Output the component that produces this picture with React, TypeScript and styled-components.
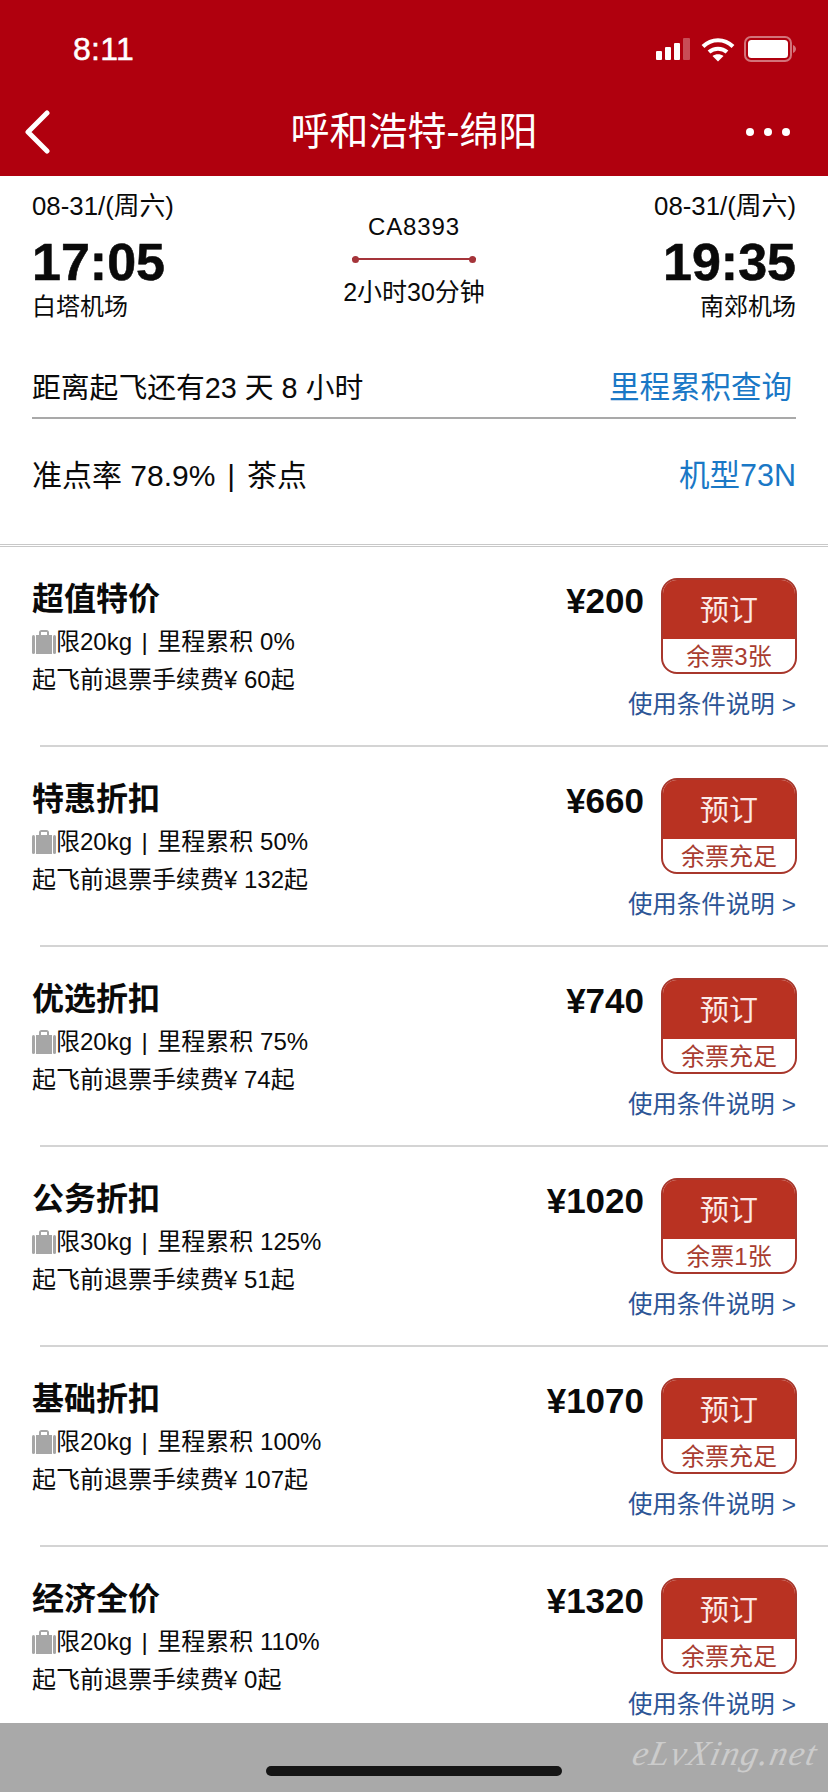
import React from "react";
import styled, { createGlobalStyle } from "styled-components";

const GlobalStyle = createGlobalStyle`
  html, body {
    margin: 0;
    padding: 0;
    background: #fff;
  }
  * {
    box-sizing: border-box;
  }
`;

const Page = styled.div`
  width: 828px;
  height: 1792px;
  display: flex;
  flex-direction: column;
  overflow: hidden;
  background: #fff;
  color: #0a0a0a;
  font-family: "Liberation Sans", "Noto Sans CJK SC", sans-serif;
`;

const Header = styled.header`
  height: 176px;
  flex: none;
  background: #b0000e;
  color: #fff;
`;

const StatusBar = styled.div`
  height: 100px;
  padding: 29px 32px 0 73px;
  display: flex;
  justify-content: space-between;
  align-items: flex-start;
`;

const Clock = styled.span`
  font-size: 32px;
  line-height: 40px;
  font-weight: 400;
  letter-spacing: 0.3px;
  -webkit-text-stroke: 0.5px #fff;
`;

const StatusIcons = styled.div`
  display: flex;
  align-items: center;
  gap: 9px;
  height: 40px;
`;

const NavBar = styled.div`
  height: 64px;
  padding: 0 24px;
  display: grid;
  grid-template-columns: 1fr auto 1fr;
  align-items: center;
`;

const NavTitle = styled.h1`
  margin: 0;
  font-size: 39px;
  line-height: 50px;
  font-weight: 400;
`;

const MoreSlot = styled.div`
  display: flex;
  justify-content: flex-end;
  padding-right: 14px;
`;

const Flight = styled.section`
  padding: 12px 32px 0;
  display: flex;
  justify-content: space-between;
  height: 143px;
`;

const Stop = styled.div<{ $end?: boolean }>`
  display: flex;
  flex-direction: column;
  align-items: ${(p) => (p.$end ? "flex-end" : "flex-start")};
`;

const DateText = styled.div`
  font-size: 25.8px;
  line-height: 36px;
`;

const Time = styled.div`
  font-size: 52px;
  line-height: 57px;
  font-weight: 700;
  margin-top: 10px;
  -webkit-text-stroke: 0.6px #0a0a0a;
`;

const Airport = styled.div`
  font-size: 24px;
  line-height: 32px;
`;

const Middle = styled.div`
  padding-top: 23px;
  display: flex;
  flex-direction: column;
  align-items: center;
  font-size: 25px;
  line-height: 32px;
`;

const FlightNo = styled.div`
  font-size: 24px;
  letter-spacing: 0.9px;
`;

const RouteLine = styled.div`
  width: 124px;
  height: 2px;
  margin: 15px 0 16px;
  background: #a5343a;
  display: flex;
  justify-content: space-between;
  align-items: center;
`;

const RouteDot = styled.i`
  width: 7px;
  height: 7px;
  border-radius: 50%;
  background: #a5343a;
`;

const InfoBlock = styled.section`
  padding: 0 32px;
`;

const InfoRow = styled.div<{ $line?: boolean }>`
  display: flex;
  justify-content: space-between;
  align-items: center;
  height: ${(p) => (p.$line ? "100px" : "108px")};
  padding-top: ${(p) => (p.$line ? "34px" : "0")};
  font-size: ${(p) => (p.$line ? "28.8px" : "30px")};
  border-bottom: ${(p) => (p.$line ? "2px solid #a9a9a9" : "none")};
`;

const InfoLink = styled.a<{ $inset?: boolean }>`
  font-size: 30.5px;
  margin-right: ${(p) => (p.$inset ? "4px" : "0")};
  color: #1a78c6;
`;

const Pipe = styled.span`
  margin: 0 0.12em;
  font-weight: 300;
`;

const SectionRule = styled.div`
  flex: none;
  height: 3px;
  margin-top: 17px;
  border-top: 1px solid #c8c8c8;
  border-bottom: 1px solid #c8c8c8;
`;

const List = styled.div`
  flex: 1;
  min-height: 0;
  overflow: hidden;
`;

const Fare = styled.article`
  height: 198px;
  padding: 31px 31px 0 32px;
  display: flex;
  justify-content: space-between;
`;

const FareInfo = styled.div`
  display: flex;
  flex-direction: column;
  margin-top: -1px;
`;

const FareName = styled.div`
  font-size: 32px;
  line-height: 44px;
  font-weight: 700;
`;

const Baggage = styled.div`
  display: flex;
  align-items: center;
  font-size: 24px;
  line-height: 36px;
  margin-top: 3px;
  white-space: pre;
`;

const Refund = styled.div`
  font-size: 24px;
  line-height: 36px;
  margin-top: 2px;
`;

const FareSide = styled.div`
  display: flex;
  flex-direction: column;
  align-items: flex-end;
`;

const BuyRow = styled.div`
  display: flex;
  gap: 17px;
`;

const Price = styled.div`
  font-size: 35px;
  line-height: 46px;
  font-weight: 700;
`;

const BookButton = styled.button`
  width: 136px;
  height: 96px;
  padding: 0;
  border: 2px solid #a8372c;
  border-radius: 16px;
  overflow: hidden;
  background: #fff;
  display: flex;
  flex-direction: column;
  font-family: inherit;
`;

const BookLabel = styled.span`
  height: 59px;
  width: 100%;
  flex: none;
  background: #b93222;
  color: #fbe9e6;
  font-size: 29px;
  line-height: 62px;
`;

const Stock = styled.span`
  flex: 1;
  width: 100%;
  color: #a83c30;
  font-size: 24px;
  line-height: 36px;
`;

const Terms = styled.a`
  margin-top: 15px;
  margin-right: 1px;
  font-size: 24.5px;
  line-height: 32px;
  color: #2c5596;
  white-space: pre;
`;

const Rule = styled.div`
  height: 2px;
  margin-left: 40px;
  background: #d4d4d4;
`;

const HomeArea = styled.footer`
  flex: none;
  height: 69px;
  padding-top: 43px;
  background: #a9a9a9;
  display: flex;
  justify-content: center;
  position: relative;
`;

const HomeBar = styled.div`
  width: 296px;
  height: 10px;
  border-radius: 5px;
  background: #151515;
`;

const Watermark = styled.span`
  position: absolute;
  right: 10px;
  top: 11px;
  font-family: "Liberation Serif", serif;
  font-style: italic;
  font-size: 35px;
  letter-spacing: 1.5px;
  color: #cccccc;
  transform: skewX(-12deg);
`;

const fares = [
  { name: "超值特价", bag: "20kg", miles: "0%", fee: "60", price: "200", stock: "余票3张" },
  { name: "特惠折扣", bag: "20kg", miles: "50%", fee: "132", price: "660", stock: "余票充足" },
  { name: "优选折扣", bag: "20kg", miles: "75%", fee: "74", price: "740", stock: "余票充足" },
  { name: "公务折扣", bag: "30kg", miles: "125%", fee: "51", price: "1020", stock: "余票1张" },
  { name: "基础折扣", bag: "20kg", miles: "100%", fee: "107", price: "1070", stock: "余票充足" },
  { name: "经济全价", bag: "20kg", miles: "110%", fee: "0", price: "1320", stock: "余票充足" },
];

const SignalIcon = () => (
  <svg width="37" height="24" viewBox="0 0 37 24">
    <rect x="1" y="14" width="6" height="9" rx="1" fill="#fff" />
    <rect x="10" y="10" width="6" height="13" rx="1" fill="#fff" />
    <rect x="19" y="6" width="6" height="17" rx="1" fill="#fff" />
    <rect x="28" y="1" width="7" height="22" rx="1" fill="#fff" fillOpacity="0.3" />
  </svg>
);

const WifiIcon = () => (
  <svg width="34" height="25" viewBox="0 0 34 25" fill="none" stroke="#fff" strokeWidth="4">
    <path d="M2 9.5C10.5 1 23.5 1 32 9.5" />
    <path d="M8 15C13 10.5 21 10.5 26 15" />
    <path d="M17 24.5 L11.5 19 C14.5 16.8 19.5 16.8 22.5 19 Z" fill="#fff" stroke="none" />
  </svg>
);

const BatteryIcon = () => (
  <svg width="52" height="26" viewBox="0 0 52 26">
    <rect x="1" y="1" width="46" height="24" rx="6" fill="none" stroke="#fff" strokeOpacity="0.45" strokeWidth="2" />
    <rect x="4" y="4" width="40" height="18" rx="3.5" fill="#fff" />
    <path d="M49 9 C51 10 52 11.5 52 13 C52 14.5 51 16 49 17 Z" fill="#fff" fillOpacity="0.45" />
  </svg>
);

const BackIcon = () => (
  <svg width="28" height="44" viewBox="0 0 28 44" fill="none" stroke="#fff" strokeWidth="5" strokeLinecap="round" strokeLinejoin="round">
    <path d="M23 3 L4 22 L23 41" />
  </svg>
);

const MoreIcon = () => (
  <svg width="44" height="10" viewBox="0 0 44 10" fill="#fff">
    <circle cx="4" cy="5" r="4" />
    <circle cx="22" cy="5" r="4" />
    <circle cx="40" cy="5" r="4" />
  </svg>
);

const BagIcon = () => (
  <svg width="24" height="26" viewBox="0 0 24 26">
    <path d="M7 6V3.5C7 2 8 1 9.5 1h5C16 1 17 2 17 3.5V6h-2V3h-6v3z" fill="#a6a6a6" />
    <rect x="0" y="6" width="3" height="19" rx="1.5" fill="#a6a6a6" />
    <rect x="4" y="6" width="16" height="19" fill="#a6a6a6" />
    <rect x="21" y="6" width="3" height="19" rx="1.5" fill="#a6a6a6" />
  </svg>
);

const App: React.FC = () => {
  return (
    <Page>
      <GlobalStyle />
      <Header>
        <StatusBar>
          <Clock>8:11</Clock>
          <StatusIcons>
            <SignalIcon />
            <WifiIcon />
            <BatteryIcon />
          </StatusIcons>
        </StatusBar>
        <NavBar>
          <BackIcon />
          <NavTitle>呼和浩特-绵阳</NavTitle>
          <MoreSlot>
            <MoreIcon />
          </MoreSlot>
        </NavBar>
      </Header>

      <Flight>
        <Stop>
          <DateText>08-31/(周六)</DateText>
          <Time>17:05</Time>
          <Airport>白塔机场</Airport>
        </Stop>
        <Middle>
          <FlightNo>CA8393</FlightNo>
          <RouteLine>
            <RouteDot />
            <RouteDot />
          </RouteLine>
          <div>2小时30分钟</div>
        </Middle>
        <Stop $end>
          <DateText>08-31/(周六)</DateText>
          <Time>19:35</Time>
          <Airport>南郊机场</Airport>
        </Stop>
      </Flight>

      <InfoBlock>
        <InfoRow $line>
          <span>距离起飞还有23 天 8 小时</span>
          <InfoLink $inset>里程累积查询</InfoLink>
        </InfoRow>
        <InfoRow>
          <span>
            准点率 78.9% <Pipe>|</Pipe> 茶点
          </span>
          <InfoLink>机型73N</InfoLink>
        </InfoRow>
      </InfoBlock>
      <SectionRule />

      <List>
        {fares.map((fare, i) => (
          <React.Fragment key={fare.name}>
            <Fare>
              <FareInfo>
                <FareName>{fare.name}</FareName>
                <Baggage>
                  <BagIcon />
                  限{fare.bag} <Pipe>|</Pipe> 里程累积 {fare.miles}
                </Baggage>
                <Refund>起飞前退票手续费¥ {fare.fee}起</Refund>
              </FareInfo>
              <FareSide>
                <BuyRow>
                  <Price>¥{fare.price}</Price>
                  <BookButton>
                    <BookLabel>预订</BookLabel>
                    <Stock>{fare.stock}</Stock>
                  </BookButton>
                </BuyRow>
                <Terms>使用条件说明 &gt;</Terms>
              </FareSide>
            </Fare>
            {i < fares.length - 1 && <Rule />}
          </React.Fragment>
        ))}
      </List>

      <HomeArea>
        <HomeBar />
        <Watermark>eLvXing.net</Watermark>
      </HomeArea>
    </Page>
  );
};

export default App;
